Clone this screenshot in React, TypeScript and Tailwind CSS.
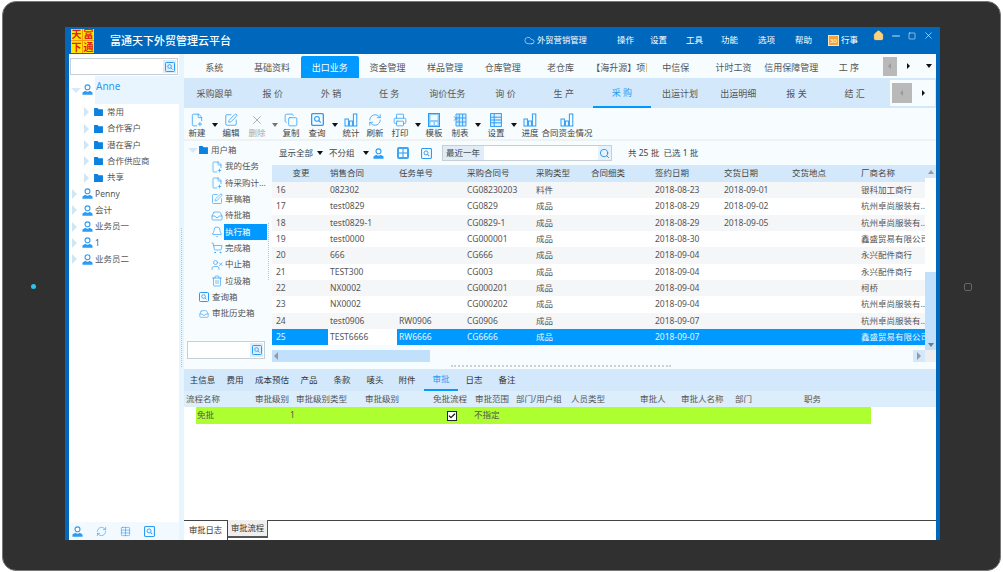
import { Bell, Check, Copy, FilePlus2, Printer, RefreshCw, Search, ShoppingCart, SquarePen, Trash2, UserX, Cloud, Home, Minus, Square, X, Inbox, Table } from "lucide-react"
import type { ReactNode } from "react"

const BLUE = "#2b9bf4"

const Person = ({ className = "" }: { className?: string }) => (
	<svg viewBox="0 0 12 12" className={`w-[11px] h-[11px] shrink-0 ${className}`}>
		<circle cx="6" cy="3.6" r="2.7" fill="white" stroke={BLUE} strokeWidth="1.2" />
		<path d="M0.5 11.7V9.2L3.6 7.4Q6 9.6 8.4 7.4L11.5 9.2V11.7Z" fill={BLUE} />
	</svg>
)

const Folder = () => (
	<svg viewBox="0 0 10 9" className="w-[9px] h-[8px] shrink-0">
		<path d="M0 0H4L5 1.4H10V9H0Z" fill="#0b82e0" />
	</svg>
)

const Bars = () => (
	<svg viewBox="0 0 14 14" className="w-[14px] h-[14px]" fill="none" stroke={BLUE} strokeWidth="1">
		<rect x="1" y="6" width="3.4" height="7" />
		<rect x="5.4" y="8" width="3" height="5" />
		<rect x="9.4" y="1" width="3.4" height="12" />
	</svg>
)

const SearchSquare = ({ size = "w-[12px] h-[12px]" }: { size?: string }) => (
	<svg viewBox="0 0 12 12" className={size} fill="none" stroke={BLUE}>
		<rect x="0.6" y="0.6" width="10.8" height="10.8" rx="1" strokeWidth="1.2" />
		<circle cx="5.5" cy="5.4" r="2.2" strokeWidth="1" />
		<path d="M7.2 7.1 9 8.9" strokeWidth="1.1" />
	</svg>
)

const TemplateIcon = () => (
	<svg viewBox="0 0 12 14" className="w-[12px] h-[14px]">
		<rect x="0.5" y="0.5" width="11" height="13" fill="#8ccbfa" stroke={BLUE} />
		<rect x="2.5" y="2" width="7" height="5" fill="#f2faff" />
		<rect x="2.5" y="9" width="3" height="3" fill="#f2faff" />
		<rect x="7" y="9" width="2.5" height="3" fill="#f2faff" />
	</svg>
)

const SheetIcon = () => (
	<svg viewBox="0 0 14 14" className="w-[14px] h-[14px]" fill="#d6ecfd" stroke={BLUE} strokeWidth="0.9">
		<path d="M3 1H13V13H3Z" />
		<path d="M3 5H13M3 9H13M6.3 1V13M9.6 1V13" />
		<path d="M1 7.5 5 3.5M1 3.5 5 7.5" />
	</svg>
)

const ColumnsIcon = () => (
	<svg viewBox="0 0 12 14" className="w-[12px] h-[14px]" fill="#e2f1fe" stroke={BLUE} strokeWidth="1">
		<rect x="0.6" y="0.6" width="10.8" height="12.8" />
		<path d="M4.2 1V13M1 4.2H11M1 7H11M1 9.8H11" />
	</svg>
)

const GridButton = () => (
	<svg viewBox="0 0 12 12" className="ml-[13px] w-[12px] h-[12px] shrink-0">
		<rect width="12" height="12" rx="2" fill="#3da5f5" />
		<rect x="2" y="2" width="3.4" height="3.4" fill="white" />
		<rect x="6.6" y="2" width="3.4" height="3.4" fill="white" />
		<rect x="2" y="6.6" width="3.4" height="3.4" fill="white" />
		<rect x="6.6" y="6.6" width="3.4" height="3.4" fill="white" />
	</svg>
)

const Arrow = ({ gray = false }: { gray?: boolean }) => (
	<span
		className={`block w-0 h-0 border-x-[3px] border-x-transparent border-t-[4px] ${gray ? "border-t-[#777]" : "border-t-[#111]"}`}
	/>
)

const TreeTri = ({ down = false }: { down?: boolean }) =>
	down ? (
		<span className="block w-0 h-0 border-x-[5px] border-x-transparent border-t-[5px] border-t-[#d6e9f8]" />
	) : (
		<span className="block w-0 h-0 border-y-[5px] border-y-transparent border-l-[5px] border-l-[#cfe6f8]" />
	)

const icon = (Node: typeof Copy, color = BLUE) => <Node size={14} strokeWidth={1.3} color={color} />

const tools: { label?: string; node?: ReactNode; ml: string; w: string; gray?: boolean; caret?: boolean }[] = [
	{ label: "新建", node: icon(FilePlus2), ml: "ml-[3px]", w: "w-[20px]" },
	{ caret: true, ml: "ml-[4px]", w: "w-[8px]" },
	{ label: "编辑", node: icon(SquarePen), ml: "ml-[2px]", w: "w-[20px]" },
	{ label: "删除", node: icon(X, "#999"), ml: "ml-[6px]", w: "w-[20px]", gray: true },
	{ caret: true, gray: true, ml: "ml-[4px]", w: "w-[8px]" },
	{ label: "复制", node: icon(Copy), ml: "ml-[2px]", w: "w-[20px]" },
	{ label: "查询", node: <SearchSquare size="w-[13px] h-[13px]" />, ml: "ml-[6px]", w: "w-[20px]" },
	{ caret: true, ml: "ml-[4px]", w: "w-[8px]" },
	{ label: "统计", node: <Bars />, ml: "ml-[2px]", w: "w-[20px]" },
	{ label: "刷新", node: icon(RefreshCw), ml: "ml-[4px]", w: "w-[20px]" },
	{ label: "打印", node: icon(Printer), ml: "ml-[5px]", w: "w-[20px]" },
	{ caret: true, ml: "ml-[4px]", w: "w-[8px]" },
	{ label: "模板", node: <TemplateIcon />, ml: "ml-[2px]", w: "w-[20px]" },
	{ label: "制表", node: <SheetIcon />, ml: "ml-[6px]", w: "w-[20px]" },
	{ caret: true, ml: "ml-[4px]", w: "w-[8px]" },
	{ label: "设置", node: <ColumnsIcon />, ml: "ml-[4px]", w: "w-[20px]" },
	{ caret: true, ml: "ml-[4px]", w: "w-[8px]" },
	{ label: "进度", node: <Bars />, ml: "ml-[2px]", w: "w-[20px]" },
	{ label: "合同资金情况", node: <Bars />, ml: "ml-0", w: "w-[54px]" },
]

const mainTabs = ["系统", "基础资料", "出口业务", "资金管理", "样品管理", "仓库管理", "老仓库", "【海升源】项目", "中信保", "计时工资", "信用保障管理", "工 序"]
const subTabs = ["采购跟单", "报 价", "外 销", "任 务", "询价任务", "询 价", "生 产", "采 购", "出运计划", "出运明细", "报 关", "结 汇"]
const menus = [
	["操作", "w-[33px]"],
	["设置", "w-[36px]"],
	["工具", "w-[35px]"],
	["功能", "w-[37px]"],
	["选项", "w-[37px]"],
	["帮助", "w-[33px]"],
]

const userBox: [string, ReactNode, boolean?][] = [
	["我的任务", icon(FilePlus2)],
	["待采购计...", icon(FilePlus2)],
	["草稿箱", icon(SquarePen)],
	["待批箱", icon(Inbox)],
	["执行箱", icon(Bell), true],
	["完成箱", icon(ShoppingCart)],
	["中止箱", icon(UserX)],
	["垃圾箱", icon(Trash2)],
]

const COLS = "grid grid-cols-[56px_69px_68px_69px_55px_64px_69px_68px_69px_66px]"
const heads = ["变更", "销售合同", "任务单号", "采购合同号", "采购类型", "合同细类", "签约日期", "交货日期", "交货地点", "厂商名称"]
const rows = [
	["16", "082302", "", "CG08230203", "料件", "", "2018-08-23", "2018-09-01", "", "银科加工商行"],
	["17", "test0829", "", "CG0829", "成品", "", "2018-08-29", "2018-09-02", "", "杭州卓尚服装有..."],
	["18", "test0829-1", "", "CG0829-1", "成品", "", "2018-08-29", "2018-09-05", "", "杭州卓尚服装有..."],
	["19", "test0000", "", "CG000001", "成品", "", "2018-08-30", "", "", "鑫盛贸易有限公司"],
	["20", "666", "", "CG666", "成品", "", "2018-09-04", "", "", "永兴配件商行"],
	["21", "TEST300", "", "CG003", "成品", "", "2018-09-04", "", "", "永兴配件商行"],
	["22", "NX0002", "", "CG000201", "成品", "", "2018-09-04", "", "", "柯桥"],
	["23", "NX0002", "", "CG000202", "成品", "", "2018-09-04", "", "", "杭州卓尚服装有..."],
	["24", "test0906", "RW0906", "CG0906", "成品", "", "2018-09-07", "", "", "杭州卓尚服装有..."],
	["25", "TEST6666", "RW6666", "CG6666", "成品", "", "2018-09-07", "", "", "鑫盛贸易有限公司"],
]

const detailTabs = [
	["主信息", "w-[35px]"],
	["费用", "w-[30px]"],
	["成本预估", "w-[44px]"],
	["产品", "w-[30px]"],
	["条款", "w-[36px]"],
	["唛头", "w-[30px]"],
	["附件", "w-[34px]"],
	["审批", "w-[34px]"],
	["日志", "w-[32px]"],
	["备注", "w-[34px]"],
]
const flowHeads = [
	["流程名称", "w-[69px]"],
	["审批级别", "w-[41px]"],
	["审批级别类型", "w-[69px]"],
	["审批级别", "w-[68px]"],
	["免批流程", "w-[42px]"],
	["审批范围", "w-[41px]"],
	["部门/用户组", "w-[55px]"],
	["人员类型", "w-[69px]"],
	["审批人", "w-[41px]"],
	["审批人名称", "w-[54px]"],
	["部门", "w-[69px]"],
	["职务", "w-[60px]"],
]

function SearchButton() {
	return (
		<span className="flex items-center justify-center w-[13px] self-stretch bg-[#dceefc]">
			<SearchSquare size="w-[10px] h-[10px]" />
		</span>
	)
}

export default function App() {
	return (
		<div className="w-[1003px] h-[572px] bg-white px-[2px] py-[1px] overflow-hidden font-['Noto_Sans','Noto_Sans_CJK_SC',sans-serif] text-[8.5px] leading-none text-[#555]">
			<div className="relative w-[999px] h-[570px] rounded-[14px] bg-[#303030] border border-[#777] pl-[62px] pt-[25px]">
				<span className="absolute left-[28px] top-[282px] w-[5px] h-[5px] rounded-full bg-[#2bc5ea]" />
				<span className="absolute left-[961px] top-[281px] w-[8px] h-[8px] rounded-[2px] border border-[#666]" />

				<div className="w-[875px] h-[513px] flex flex-col bg-[#0068bc] px-[4px]">
					{/* title bar */}
					<div className="-mx-[4px] h-[27px] shrink-0 flex items-center text-white">
						<div className="ml-[6px] w-[23px] h-[24px] bg-[#f59a00] grid grid-cols-2 grid-rows-2 gap-px text-[10px] font-bold text-[#e0201c]">
							<span className="bg-[#ffe600] flex items-center justify-center">天</span>
							<span className="bg-[#ffe600] flex items-center justify-center">富</span>
							<span className="bg-[#ffe600] flex items-center justify-center">下</span>
							<span className="bg-[#ffe600] flex items-center justify-center">通</span>
						</div>
						<span className="ml-[16px] w-[414px] text-[11px] font-medium">富通天下外贸管理云平台</span>
						<Cloud size={11} strokeWidth={1.2} className="shrink-0" />
						<span className="ml-[2px] w-[80px] text-[8.3px]">外贸营销管理</span>
						{menus.map(([m, w]) => (
							<span key={m} className={`${w} text-[8.5px]`}>
								{m}
							</span>
						))}
						<span className="w-[11px] h-[11px] bg-[#f8a23c] border border-[#ffe3b8] shrink-0 text-[6px] text-white flex items-center justify-center">30</span>
						<span className="ml-[2px] w-[32px] text-[8.5px]">行事</span>
						<div className="flex items-center gap-[6px] mb-[10px]">
							<Home size={11} color="#ffd27a" fill="#ffd27a" />
							<Minus size={12} strokeWidth={1.6} />
							<Square size={8} strokeWidth={1.6} />
							<X size={11} strokeWidth={1.3} className="ml-px" />
						</div>
					</div>

					<div className="flex-1 min-h-0 flex bg-white">
						{/* sidebar */}
						<div className="w-[110px] shrink-0 flex flex-col bg-white">
							<div className="mx-[1px] mt-[4px] h-[17px] flex border border-[#c6ced6] p-px">
								<span className="flex-1" />
								<SearchButton />
							</div>
							<div className="flex-1">
								<div className="h-[28px] mt-[1px] flex">
									<span className="ml-[2px] mt-[12px] w-[10px]">
										<TreeTri down />
									</span>
									<Person className="mt-[8px] ml-[1px]" />
									<span className="ml-[2px] pl-px flex-1 bg-[#e9f5fe] text-[10px] text-[#2b9bf4] pt-[5px]">Anne</span>
								</div>
								{["常用", "合作客户", "潜在客户", "合作供应商", "共享"].map((t) => (
									<div key={t} className="h-[16.35px] flex items-center pl-[15px]">
										<span className="w-[10px]">
											<TreeTri />
										</span>
										<Folder />
										<span className="ml-[4px]">{t}</span>
									</div>
								))}
								{["Penny", "会计", "业务员一", "1", "业务员二"].map((t) => (
									<div key={t} className="h-[16.35px] flex items-center pl-[3px]">
										<span className="w-[10px]">
											<TreeTri />
										</span>
										<Person />
										<span className="ml-[2px]">{t}</span>
									</div>
								))}
							</div>
							<div className="h-[18px] bg-[#f3faff] flex items-center gap-[13px] pl-[3px] [&>*]:shrink-0">
								<Person />
								<RefreshCw size={11} color={BLUE} strokeWidth={1.3} />
								<Table size={11} color={BLUE} strokeWidth={1.3} />
								<SearchSquare size="w-[11px] h-[11px]" />
							</div>
						</div>
						<div className="w-[5px] shrink-0 bg-[#e6f5fe] pt-[174px] pl-[2px]">
							<span className="block h-[139px] border-l border-dotted border-[#b9c4cb]" />
						</div>

						{/* main */}
						<div className="flex-1 min-w-0 flex flex-col bg-[#f7fcff]">
							<div className="h-[24px] shrink-0 flex items-end pl-[1.5px] text-[9px]">
								{mainTabs.map((t) => (
									<span
										key={t}
										className={`w-[57.7px] h-[22px] flex items-center justify-center overflow-hidden whitespace-nowrap ${t === "出口业务" ? "bg-[#0099ff] text-white rounded-t-[2px]" : ""} ${t === "【海升源】项目" ? "px-[2px] justify-start" : ""}`}>
										{t}
									</span>
								))}
								<span className="ml-[5px] self-center w-[14px] h-[19px] bg-[#b9b9b9] flex items-center justify-center">
									<span className="block w-0 h-0 border-y-[3px] border-y-transparent border-r-[3px] border-r-[#999]" />
								</span>
								<span className="ml-[10px] self-center block w-0 h-0 border-y-[3px] border-y-transparent border-l-[3px] border-l-[#111]" />
								<span className="ml-[16px] self-center">
									<Arrow />
								</span>
							</div>
							<div className="h-[30px] shrink-0 flex bg-[#d3e9fb] pl-[1.5px] text-[9px]">
								{subTabs.map((t) => (
									<span
										key={t}
										className={`w-[58.2px] flex items-center justify-center whitespace-nowrap ${t === "采 购" ? "text-[#1f9cf5] border-b-2 border-[#0099ff]" : ""}`}>
										{t}
									</span>
								))}
								<span className="ml-[6px] my-[2px] w-[45px] bg-[#f7fcff] flex items-center pl-[2px]">
									<span className="w-[20px] h-[20px] bg-[#b9b9b9] flex items-center justify-center">
										<span className="block w-0 h-0 border-y-[3px] border-y-transparent border-r-[3px] border-r-[#999]" />
									</span>
									<span className="ml-[10px] block w-0 h-0 border-y-[3px] border-y-transparent border-l-[3px] border-l-[#111]" />
								</span>
							</div>

							{/* toolbar */}
							<div className="h-[33px] shrink-0 flex border-b-2 border-[#eef2f5]">
								{tools.map((b, i) =>
									b.caret ? (
										<span key={i} className={`${b.ml} ${b.w} flex justify-center pt-[15px]`}>
											<Arrow gray={b.gray} />
										</span>
									) : (
										<div key={i} className={`${b.ml} ${b.w} flex flex-col items-center pt-[4px]`}>
											<span className="h-[15px] flex items-center">{b.node}</span>
											<span className={`mt-[2px] whitespace-nowrap ${b.gray ? "text-[#aaa]" : "text-[#444]"}`}>{b.label}</span>
										</div>
									),
								)}
							</div>

							<div className="h-[221px] shrink-0 flex">
								{/* box tree */}
								<div className="w-[83px] shrink-0 flex flex-col pt-[1px]">
									<div className="h-[16.35px] flex items-center pl-[4px]">
										<span className="w-[11px]">
											<TreeTri down />
										</span>
										<Folder />
										<span className="ml-[3px]">用户箱</span>
									</div>
									{userBox.map(([t, node, on]) => (
										<div key={t} className="h-[16.35px] flex items-center pl-[27px]">
											<span className="w-[13px] [&>svg]:w-[12px] [&>svg]:h-[12px]">{node}</span>
											<span className={`h-full flex-1 flex items-center pl-px ${on ? "bg-[#0099ff] text-white" : ""}`}>{t}</span>
										</div>
									))}
									<div className="h-[16.35px] flex items-center pl-[15px]">
										<SearchSquare size="w-[10px] h-[10px]" />
										<span className="ml-[3px]">查询箱</span>
									</div>
									<div className="h-[16.35px] flex items-center pl-[15px]">
										<Inbox size={10} color={BLUE} strokeWidth={1.4} />
										<span className="ml-[3px]">审批历史箱</span>
									</div>
									<div className="mt-auto mb-[3px] ml-[3px] w-[78px] h-[18px] flex border border-[#c6ced6] bg-white p-px">
										<span className="flex-1" />
										<SearchButton />
									</div>
								</div>
								<div className="w-[5px] shrink-0 pt-[82px] pl-[1px]">
									<span className="block h-[57px] border-l border-dotted border-[#b9c4cb]" />
								</div>

								{/* contract table */}
								<div className="flex-1 min-w-0 flex flex-col">
									<div className="h-[24px] shrink-0 flex items-center pl-[7px] text-[#444]">
										<span className="w-[38px]">显示全部</span>
										<Arrow />
										<span className="ml-[6px] w-[30px]">不分组</span>
										<span className="ml-[4px]">
											<Arrow />
										</span>
										<Person className="ml-[4px]" />
										<GridButton />
										<span className="ml-[12px]">
											<SearchSquare size="w-[11px] h-[11px]" />
										</span>
										<div className="ml-[10px] w-[170px] h-[16px] flex items-stretch border border-[#c6ced6] bg-white">
											<span className="w-[41px] bg-[#e0ecf8] flex items-center pl-[3px]">最近一年</span>
											<span className="flex-1" />
											<span className="w-[13px] bg-[#e6f3fd] flex items-center justify-center">
												<Search size={11} color="#1685dc" strokeWidth={1.8} />
											</span>
										</div>
										<span className="ml-[16px]">共 25 批&nbsp;&nbsp;已选 1 批</span>
									</div>
									<div className="flex flex-1 min-h-0">
										<div className="w-[653px] shrink-0">
											<div className={`${COLS} h-[17px] bg-[#d3e9fb] text-[#444]`}>
												{heads.map((h, i) => (
													<span key={h} className={`flex items-center pl-[2px] ${i === 0 ? "justify-center" : ""}`}>
														{h}
													</span>
												))}
											</div>
											{rows.map((r, ri) => (
												<div key={r[0]} className={`${COLS} h-[16.35px] ${ri % 2 === 0 ? "bg-[#f5f6f8]" : "bg-white"}`}>
													{r.map((c, ci) => {
														const selected = ri === 9 && ci !== 1
														return (
															<span
																key={ci}
																className={`flex items-center whitespace-nowrap overflow-hidden pl-[2px] ${selected ? "bg-[#0099ff] text-[#e8f6ff]" : ""} ${ci === 0 ? "pl-[4px]" : ""}`}>
																{c}
															</span>
														)
													})}
												</div>
											))}
										</div>
										<div className="w-[11px] flex flex-col bg-white">
											<span className="h-[13px] bg-[#d3e9fb] flex items-center justify-center">
												<span className="block w-0 h-0 border-x-[3px] border-x-transparent border-b-[4px] border-b-[#999]" />
											</span>
											<span className="h-[94px]" />
											<span className="flex-1 bg-[#c0e0fb] flex items-end justify-center pb-[3px]">
												<Arrow gray />
											</span>
										</div>
									</div>
									<div className="h-[12px] shrink-0 flex">
										<span className="w-[158px] bg-[#c0e0fb] flex items-center pl-[2px]">
											<span className="block w-0 h-0 border-y-[4px] border-y-transparent border-r-[4px] border-r-[#999]" />
										</span>
										<span className="w-[483px]" />
										<span className="w-[12px] bg-[#d3e9fb] flex items-center justify-center">
											<span className="block w-0 h-0 border-y-[4px] border-y-transparent border-l-[4px] border-l-[#999]" />
										</span>
										<span className="w-[11px] bg-[#eee]" />
									</div>
								</div>
							</div>

							{/* horizontal splitter */}
							<div className="h-[7px] shrink-0 flex items-center pl-[267px]">
								<span className="w-[220px] border-t-2 border-dotted border-[#c8d2d8]" />
							</div>

							{/* detail */}
							<div className="h-[22px] shrink-0 flex bg-[#d3e9fb] pl-[1px] text-[#333]">
								{detailTabs.map(([t, w]) => (
									<span
										key={t}
										className={`${w} flex items-center justify-center whitespace-nowrap ${t === "审批" ? "text-[#1f9cf5] border-b-2 border-[#0099ff]" : ""}`}>
										{t}
									</span>
								))}
							</div>
							<div className="h-[16px] shrink-0 flex items-center bg-[#dcedfb] pl-[2px]">
								{flowHeads.map(([t, w], i) => (
									<span key={i} className={`${w} whitespace-nowrap`}>
										{t}
									</span>
								))}
							</div>
							<div className="flex-1 min-h-0 bg-white">
								<div className="ml-[12px] w-[675px] h-[17px] bg-[#adff2f] flex items-center">
									<span className="ml-px w-[93px]">免批</span>
									<span className="w-[157px]">1</span>
									<span className="w-[10px] h-[10px] border border-[#222] bg-white flex items-center justify-center">
										<Check size={8} strokeWidth={3.5} color="#111" />
									</span>
									<span className="ml-[17px]">不指定</span>
								</div>
							</div>
							<div className="h-[20px] shrink-0 flex bg-white text-[#333] text-[8.3px]">
								<span className="w-[44px] flex items-center justify-center border-t border-r border-[#444]">审批日志</span>
								<span className="w-[40px] h-[18px] flex items-center justify-center bg-[#efefef] border-b-2 border-r border-[#555] whitespace-nowrap">审批流程</span>
								<span className="flex-1 border-t border-[#444]" />
							</div>
						</div>
					</div>
				</div>
			</div>
		</div>
	)
}
